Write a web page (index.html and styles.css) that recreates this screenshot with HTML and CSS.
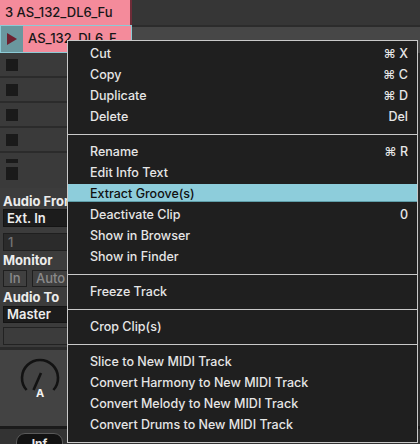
FILE: index.html
```html
<!DOCTYPE html>
<html lang="en">
<head>
    <meta charset="UTF-8">
    <meta name="viewport" content="width=device-width, initial-scale=1.0">
    <title>Clip Context Menu</title>
    <link rel="stylesheet" href="styles.css">
</head>
<body>

    <div class="session">
        <div class="row-top">
            <div class="clip">3 AS_132_DL6_Fu</div>
            <div class="fill"></div>
        </div>

        <div class="row-sel">
            <div class="sel">
                <span class="play">
                    <svg width="10" height="12" viewBox="0 0 10 12"><polygon points="0,0 10,6 0,12" fill="#6e2130"/></svg>
                </span>
                <span class="sel-name">AS_132_DL6_F</span>
            </div>
            <div class="fill"></div>
        </div>

        <!-- empty clip slots -->
        <div class="slot"><span class="stop"></span></div>
        <div class="slot"><span class="stop"></span></div>
        <div class="slot"><span class="stop"></span></div>
        <div class="slot"><span class="stop"></span></div>
        <div class="slot slot-short"><span class="stop"></span></div>
        <div class="slot slot-last"><span class="stop"></span></div>

        <div class="mixer">
            <div class="label">Audio From</div>
            <div class="dropdown">Ext. In</div>
            <div class="field dim">1</div>
            <div class="label">Monitor</div>
            <div class="monitor">
                <span class="mbtn mbtn-in">In</span>
                <span class="mbtn mbtn-auto">Auto</span>
            </div>
            <div class="label">Audio To</div>
            <div class="dropdown dropdown-to">Master</div>
            <div class="field empty"></div>
        </div>

        <div class="sends">
            <svg width="60" height="60" viewBox="0 0 60 60">
                <path d="M 16.6 37 A 18 18 0 1 1 43.4 37" fill="none" stroke="#121212" stroke-width="2.6"/>
                <line x1="31" y1="20" x2="23.5" y2="37" stroke="#121212" stroke-width="2.6"/>
                <text x="30" y="44" text-anchor="middle" class="send-name">A</text>
            </svg>
        </div>

        <div class="bottom">
            <span class="pill">Inf</span>
        </div>
    </div>

    <div class="menu">
        <div class="group">
            <div class="item"><span>Cut</span><span class="key">&#8984; X</span></div>
            <div class="item"><span>Copy</span><span class="key">&#8984; C</span></div>
            <div class="item"><span>Duplicate</span><span class="key">&#8984; D</span></div>
            <div class="item"><span>Delete</span><span class="key">Del</span></div>
        </div>
        <div class="group">
            <div class="item"><span>Rename</span><span class="key">&#8984; R</span></div>
            <div class="item"><span>Edit Info Text</span></div>
            <div class="item active"><span>Extract Groove(s)</span></div>
            <div class="item"><span>Deactivate Clip</span><span class="key">0</span></div>
            <div class="item"><span>Show in Browser</span></div>
            <div class="item"><span>Show in Finder</span></div>
        </div>
        <div class="group">
            <div class="item"><span>Freeze Track</span></div>
        </div>
        <div class="group">
            <div class="item"><span>Crop Clip(s)</span></div>
        </div>
        <div class="group">
            <div class="item"><span>Slice to New MIDI Track</span></div>
            <div class="item"><span>Convert Harmony to New MIDI Track</span></div>
            <div class="item"><span>Convert Melody to New MIDI Track</span></div>
            <div class="item"><span>Convert Drums to New MIDI Track</span></div>
        </div>
    </div>

</body>
</html>
```

FILE: styles.css
```css
* { box-sizing: border-box; }
body { margin: 0; width: 420px; height: 444px; overflow: hidden; position: relative; background: #2c2c2c; font-family: Inter, "Noto Sans", "DejaVu Sans", sans-serif; font-size: 13px; font-weight: 500; }

/* session clips */
.row-top, .row-sel { display: flex; }
.row-top { height: 25px; }
.row-top .fill { flex: 1; background: #363636; }
.clip { width: 132px; background: #f48b9b; color: #161616; padding-left: 5px; line-height: 25px; white-space: nowrap; overflow: hidden; border-right: 2px solid #6f2c38; }
.row-sel { height: 28px; }
.row-sel .fill { flex: 1; background: #474747; border-top: 2px solid #2c2c2c; }
.sel { width: 132px; display: flex; border: 1.5px solid #8ccbd6; }
.play { width: 22px; background: #6a979e; display: flex; align-items: center; justify-content: center; }
.sel-name { flex: 1; background: #f48b9b; color: #161616; padding-left: 5px; line-height: 25px; white-space: nowrap; overflow: hidden; }
.slot { width: 132px; height: 25px; background: #3a3a3a; border-bottom: 2px solid #2b2b2b; display: flex; align-items: center; padding-left: 6px; }
.stop { width: 12px; height: 12px; background: #1a1a1a; }
.slot-short { height: 10px; align-items: flex-start; overflow: hidden; border-bottom: 0; }
.slot-short .stop { margin-top: 6px; }
.slot-last { height: 25px; align-items: flex-start; border-bottom: 0; }
.slot-last .stop { margin-top: 4px; height: 13px; }

/* mixer strip */
.mixer { width: 132px; background: #3c3c3c; padding: 5px 0 0 3px; height: 159px; }
.label { color: #ececec; font-weight: 700; line-height: 16px; white-space: nowrap; }
.dropdown { height: 18px; background: #1c1c1c; border: 1px solid #141414; color: #ececec; font-weight: 600; line-height: 16px; padding-left: 3px; }
.dropdown-to { height: 17px; margin-top: 1px; line-height: 15px; }
.field { height: 18px; margin-top: 6px; background: #2b2b2b; border: 1px solid #1f1f1f; line-height: 16px; padding-left: 4px; }
.field.dim { color: #747474; margin-bottom: 1px; }
.field.empty { margin-top: 4px; background: #3c3c3c; border-color: #222; }
.monitor { display: flex; gap: 5px; margin: 2px 0 2px; }
.mbtn { height: 17px; background: #404040; border: 1px solid #1f1f1f; color: #8a8a8a; line-height: 15px; padding: 0 3px; }
.mbtn-in { width: 24px; text-align: center; }
.mbtn-auto { width: 60px; }

.sends { width: 132px; height: 79px; background: #434343; border-top: 3px solid #2a2a2a; padding: 3px 0 0 10px; }
.send-name { fill: #f2f2f2; font-family: Inter, "DejaVu Sans", sans-serif; font-size: 11px; font-weight: 700; }
.bottom { height: 30px; background: #333; border-top: 3px solid #1b1b1b; padding: 4px 0 0 16px; }
.pill { display: inline-block; width: 47px; height: 24px; background: #121212; border: 1px solid #5a5a5a; border-radius: 9px; color: #e8e8e8; text-align: center; line-height: 20px; font-size: 12px; font-weight: 700; }

/* context menu */
.menu { position: absolute; left: 67px; top: 40px; width: 351px; background: #1f1f1f; border: 1px solid #c9c9c9; color: #e6e6e6; font-size: 12.5px; }
.group { padding: 7px 0 6px; border-top: 1px solid #c9c9c9; }
.group:first-child { padding-top: 3px; border-top: 0; }
.item { height: 18px; margin-bottom: 3px; line-height: 19px; padding: 0 9px 0 22px; display: flex; justify-content: space-between; white-space: nowrap; }
.item.active { background: #8dcddb; color: #111; box-shadow: inset 0 -1px #5f9ea9; }
.key { color: #e6e6e6; }
```
